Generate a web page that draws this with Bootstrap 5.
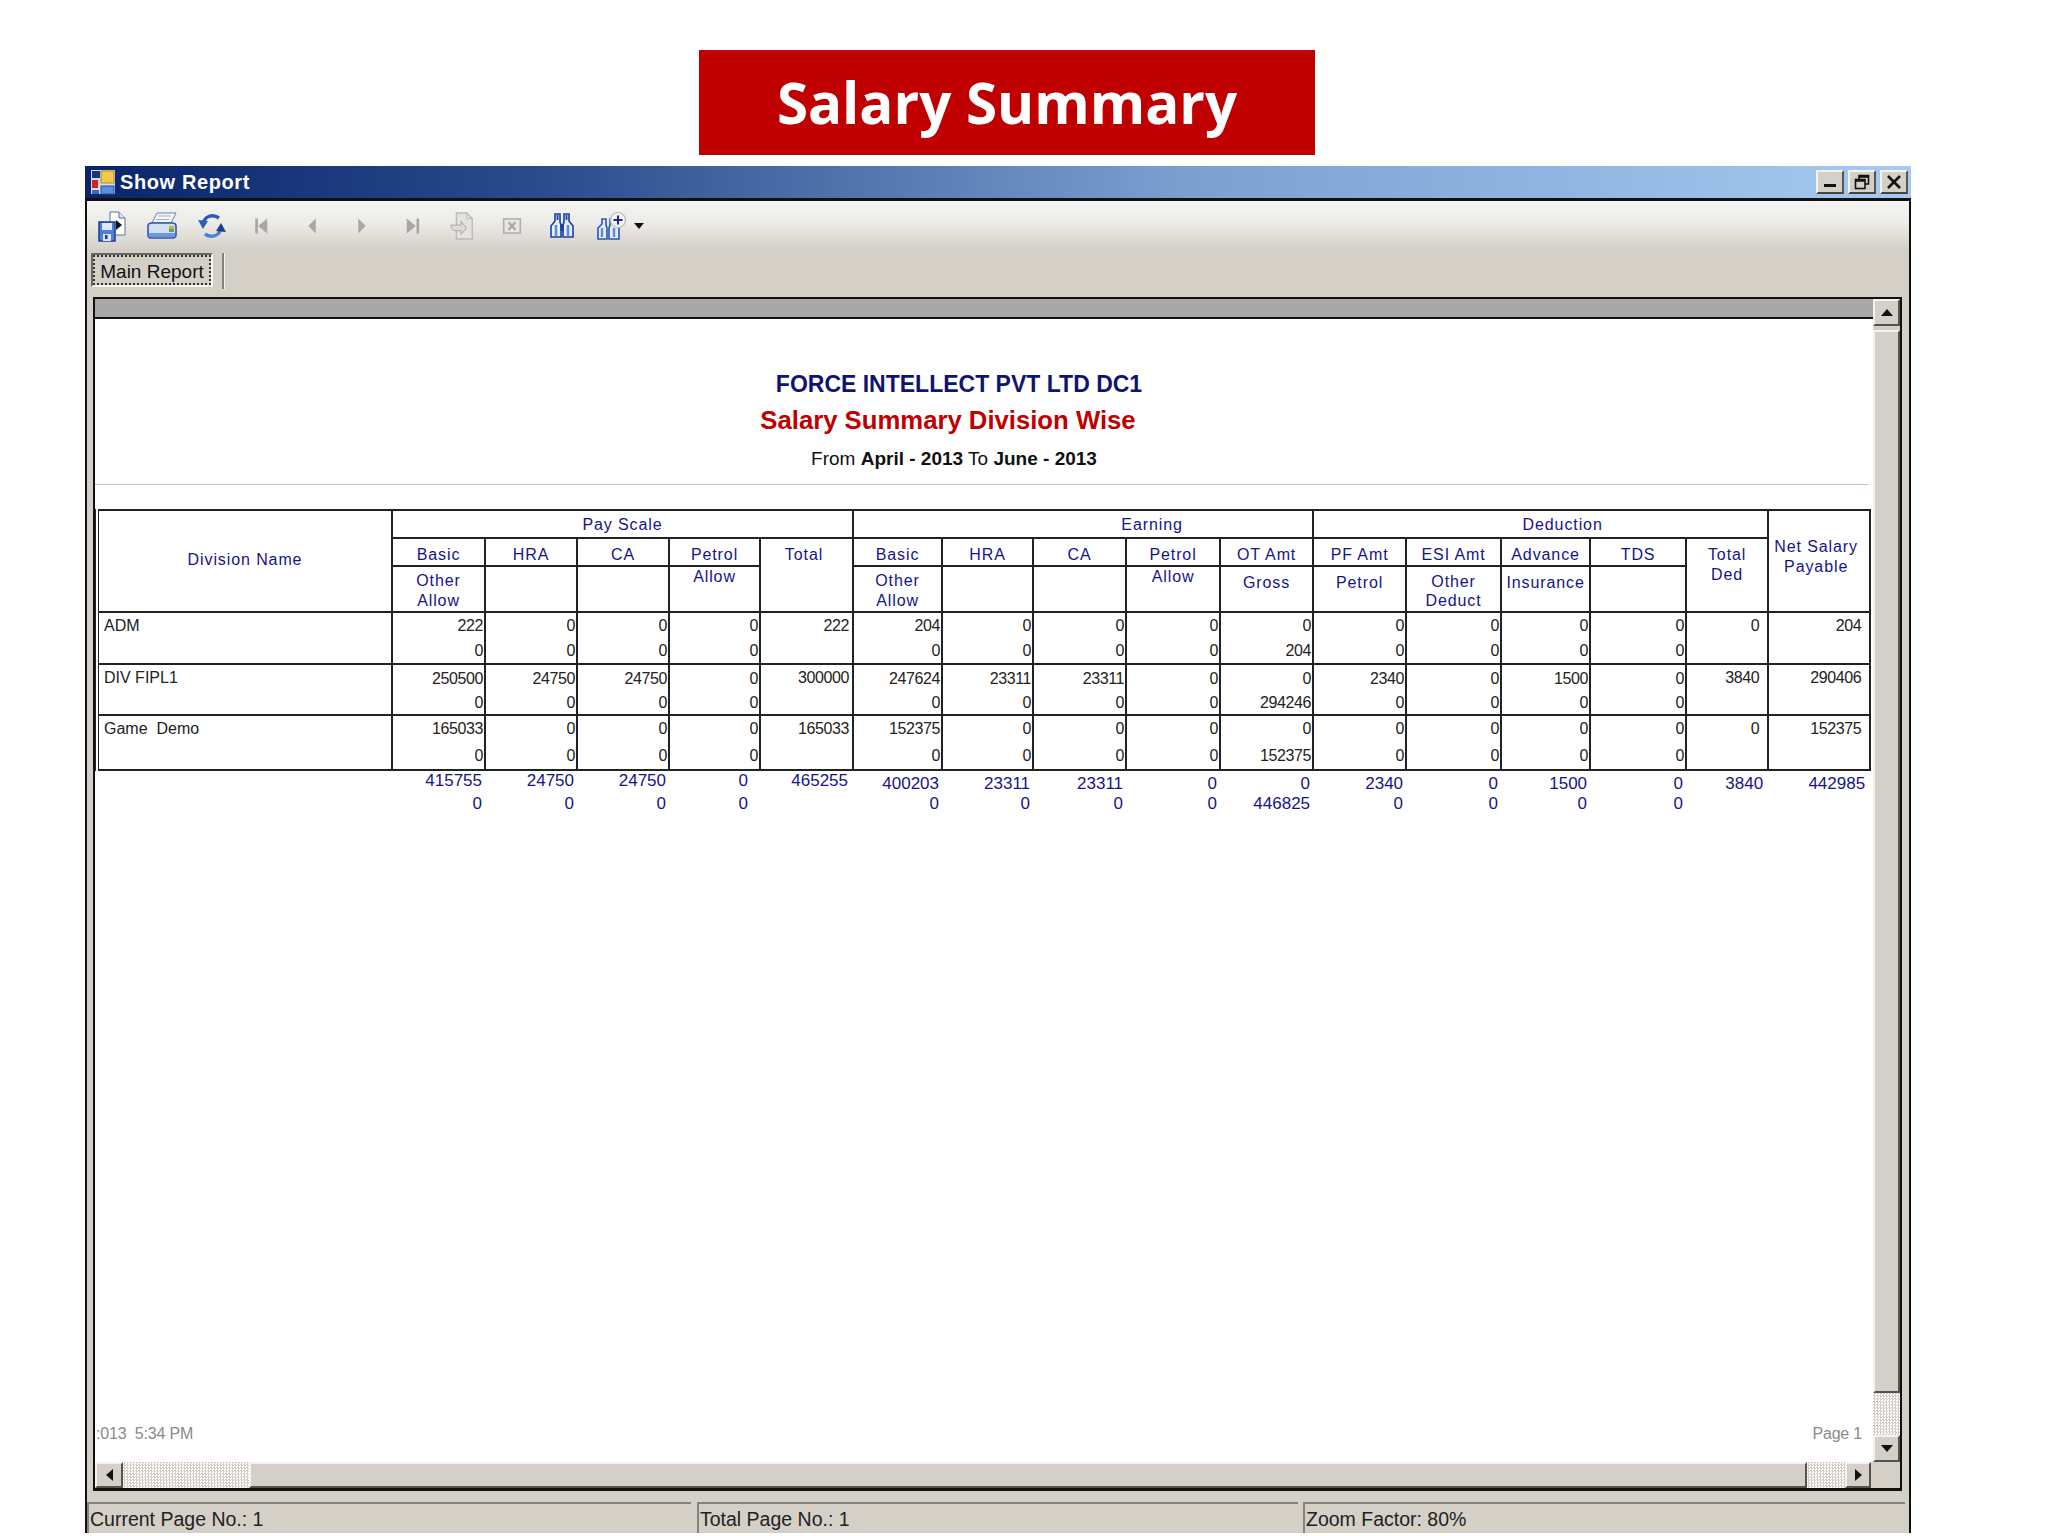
<!DOCTYPE html>
<html lang="en">
<head>
  <meta charset="UTF-8" />
  <meta name="viewport" content="width=device-width, initial-scale=1.0" />
  <title>Salary Summary</title>
  <link href="https://cdn.jsdelivr.net/npm/bootstrap@5.3.0/dist/css/bootstrap.min.css" rel="stylesheet" />
  <style>
    body {
      background-color: #fff;
      height: 1536px;
      overflow: hidden;
      font-family: "Liberation Sans", Arial, sans-serif;
    }

    .banner {
      width: 616px;
      height: 105px;
      margin: 50px 0 11px 699px;
      padding-top: 2px;
      background-color: #c00000;
      color: #fff;
      font-family: "Open Sans", sans-serif;
      font-size: 56.5px;
      font-weight: 700;
    }

    .win { width: 1826px; margin-left: 85px; }

    .titlebar {
      height: 32px;
      padding: 0 3px 0 5px;
      background: linear-gradient(90deg, #0a246a 0%, #2a4c8c 25%, #7c9fd0 60%, #a6caf0 100%);
      color: #fff;
      font-size: 20px;
      font-weight: 700;
      letter-spacing: .6px;
    }

    .win-btn {
      width: 28px;
      height: 24px;
      background-color: #d4d0c8;
      border: 2px solid;
      border-color: #f4f3ef #555 #444 #f4f3ef;
    }

    .win-body {
      height: 1335px;
      background-color: #d4d0c8;
      border: solid #111;
      border-width: 3px 2px 0 2px;
    }

    .toolbar {
      height: 49px;
      background: linear-gradient(180deg, #f5f5f3 0%, #ecebe7 45%, #d4d0c8 100%);
    }

    .tool { width: 50px; height: 49px; }

    .caret-down {
      width: 0;
      height: 0;
      margin-left: -3px;
      border: 5px solid transparent;
      border-top: 6px solid #111;
      border-bottom: 0;
    }

    .tabs { height: 47px; padding: 3px 0 0 4px; }

    .tab-btn {
      width: 122px;
      height: 34px;
      padding: 3px 0 0;
      background-color: #d4d0c8;
      border: 2px solid;
      border-color: #666 #f6f5f1 #f6f5f1 #666;
      border-radius: 0;
      color: #111;
      font-size: 19px;
      line-height: 24px;
      outline: 2px dotted #333;
      outline-offset: -4px;
    }

    .tab-sep {
      width: 3px;
      height: 36px;
      margin-left: 9px;
      border-left: 2px solid #85837d;
      border-right: 1px solid #f6f5f1;
    }

    .frame {
      height: 1194px;
      margin: 0 7px 0 6px;
      border: solid #111;
      border-width: 2px 2px 3px 2px;
    }

    .band { height: 20px; background-color: #a9a7a5; border-bottom: 2px solid #111; }

    .report { background-color: #fff; color: #222; }

    .report-head { width: 1722px; }
    .report-head div { line-height: 36px; }
    .r-company { padding: 47px 0 0 6px; color: #0e1470; font-size: 23px; font-weight: 700; }
    .r-name { padding-right: 16px; color: #c00000; font-size: 25.7px; font-weight: 700; }
    .r-range { padding: 3px 4px 0 0; color: #111; font-size: 19px; }
    .r-rule { height: 1px; margin: 7px 5px 24px 0; background-color: #bcbcea; }

    .grid {
      width: 1773px;
      margin-bottom: 0;
      table-layout: fixed;
      border-collapse: collapse;
      font-size: 16px;
      line-height: 20px;
    }

    .grid > :not(caption) > * > * {
      padding: 0;
      background-color: transparent;
      border: 2px solid #222;
      box-shadow: none;
    }

    .grid th {
      color: #14148a;
      font-weight: 400;
      letter-spacing: .9px;
      text-align: center;
      vertical-align: top;
    }

    .grid td { color: #222; letter-spacing: -.4px; text-align: right; }

    .grid .head-a { height: 28px; }
    .grid .head-b { height: 27px; }
    .grid .head-c { height: 44px; }
    .grid th.first { padding-bottom: 3px; border-left: 4px double #222; vertical-align: middle; }
    .grid th.group { padding-top: 2px; vertical-align: middle; }
    .grid th.earning { padding-left: 138px; }
    .grid th.deduction { padding-left: 44px; }
    .grid th.mid { padding-top: 6px; }
    .grid th.pt4 { padding-top: 4px; }
    .grid th.pt6 { padding-top: 6px; }
    .grid th.tight { padding-top: 5px; line-height: 19px; }
    .grid th.net { padding: 26px 6px 0 0; }
    .grid th.total { padding-right: 5px; }

    .grid .up td { padding-right: 1px; border-bottom: 0; vertical-align: middle; }
    .grid .down td { padding-right: 1px; border-top: 0; vertical-align: middle; }

    .grid .up td[rowspan] { border-bottom: 2px solid #222; vertical-align: top; }
    .grid .up td.name { padding: 3px 0 0 5px; border-left: 4px double #222; letter-spacing: 0; text-align: left; }
    .grid .up td.side { padding: 3px 8px 0 0; }
    .grid .up td.solo { padding: 3px 3px 0 0; }

    .grid .h28 { height: 28px; }
    .grid .h27 { height: 27px; }
    .grid .h25 { height: 25px; }
    .grid .h23 { height: 23px; }

    .grid .sum td {
      padding: 0 3px 0 0;
      border: 0;
      color: #14148a;
      font-size: 17px;
      letter-spacing: 0;
      vertical-align: top;
    }

    .grid .sum-a { height: 20px; }
    .grid .sum-b { height: 24px; }
    .grid .sum-a td { padding-top: 3px; }
    .grid .sum .hi { padding-top: 0; }
    .grid .sum .gap12 { padding-right: 12px; }
    .grid .sum .gap5 { padding-right: 5px; }

    .report-foot { padding: 0 11px 18px 1px; color: #8a8a8a; font-size: 16px; line-height: 20px; letter-spacing: -.2px; }

    .vscroll { width: 27px; }
    .hscroll { height: 26px; }

    .bevel {
      background-color: #d4d0c8;
      border: 2px solid;
      border-color: #f4f3ef #55534e #55534e #f4f3ef;
    }

    .dither { background: repeating-conic-gradient(#d4d0c8 0 25%, #fff 0 50%) 0 0 / 3px 3px; }

    .v-btn { width: 27px; height: 27px; }
    .h-btn { width: 28px; height: 26px; }
    .h-btn.end { width: 26px; }

    .tri { width: 0; height: 0; border: 6px solid transparent; }
    .tri.t-up { border-top: 0; border-bottom: 7px solid #111; }
    .tri.t-down { border-bottom: 0; border-top: 7px solid #111; }
    .tri.t-left { border-left: 0; border-right: 7px solid #111; }
    .tri.t-right { border-right: 0; border-left: 7px solid #111; }

    .corner { width: 29px; }

    .status { height: 31px; margin-top: 11px; color: #222; font-size: 19.5px; line-height: 30px; }
    .status > div {
      height: 31px;
      padding-left: 1px;
      border-top: 2px solid #85837d;
      border-left: 2px solid #85837d;
      white-space: nowrap;
    }
    .s-a { width: 604px; margin-right: 6px; }
    .s-b { width: 601px; margin-right: 5px; }
    .s-c { width: 602px; }
  </style>
</head>
<body>

  <div class="banner d-flex justify-content-center align-items-center">Salary Summary</div>

  <div class="win">
    <!-- Title bar -->
    <div class="titlebar d-flex align-items-center">
      <svg width="26" height="26" viewBox="0 0 26 26" class="me-1">
        <rect x="1" y="1" width="24" height="24" fill="#d8dce8" />
        <rect x="2" y="2" width="8" height="7" fill="#1c3478" />
        <rect x="11" y="2" width="13" height="12" fill="#f2c94a" stroke="#a88a2a" />
        <rect x="2" y="11" width="6" height="8" fill="#c8261e" />
        <rect x="2" y="21" width="7" height="4" fill="#3a6ab8" />
        <rect x="11" y="17" width="13" height="8" fill="#5c8fe0" stroke="#2a4c9c" />
      </svg>
      <span>Show Report</span>
      <div class="ms-auto d-flex">
        <div class="win-btn d-flex align-items-end justify-content-center pb-1 me-1"><svg width="12" height="4"><rect width="12" height="3" fill="#111" /></svg></div>
        <div class="win-btn d-flex align-items-center justify-content-center"><svg width="16" height="16" viewBox="0 0 16 16" fill="none" stroke="#111" stroke-width="1.6"><path d="M5 5V1.5h9.5V10H11" /><path d="M5 2.5h9.5" stroke-width="2.5" /><rect x="1.5" y="5.5" width="9.5" height="9" /><path d="M1.5 6.5H11" stroke-width="2.5" /></svg></div>
        <div class="win-btn d-flex align-items-center justify-content-center ms-1"><svg width="16" height="14" viewBox="0 0 16 14" stroke="#111" stroke-width="2.6"><path d="M2 1l12 12M14 1L2 13" /></svg></div>
      </div>
    </div>

    <div class="win-body d-flex flex-column">
      <!-- Toolbar -->
      <div class="toolbar d-flex align-items-center">
        <div class="tool d-flex align-items-center justify-content-center">
          <svg width="32" height="32" viewBox="0 0 32 32">
            <path d="M14 2h9l6 6v17H14z" fill="#fff" stroke="#55709c" />
            <path d="M23 2v6h6" fill="#dfe8f8" stroke="#55709c" />
            <path d="M20 10l6 5-6 5z" fill="#111" />
            <rect x="3" y="12" width="16" height="19" fill="#4f7fd6" stroke="#1c3f94" stroke-width="1.5" />
            <rect x="6" y="13" width="10" height="7" fill="#dfe8f8" />
            <rect x="7" y="24" width="8" height="7" fill="#dfe4ee" />
            <rect x="9" y="25" width="2.5" height="4" fill="#1c3f94" />
          </svg>
        </div>
        <div class="tool d-flex align-items-center justify-content-center">
          <svg width="32" height="32" viewBox="0 0 32 32">
            <path d="M11 3h19l-5 10H6z" fill="#f4f6fb" stroke="#6a7ea8" />
            <path d="M12 6h13M10 9.500h13" stroke="#9fb0cc" />
            <path d="M2 16q0-3 4-3h20q4 0 4 3v9q0 3-4 3H6q-4 0-4-3z" fill="#cfe0f6" stroke="#2c56a8" stroke-width="1.6" />
            <path d="M3 23h26v2q0 2-3 2H6q-3 0-3-2z" fill="#6f98dc" />
            <rect x="23" y="16" width="5" height="3" fill="#e0a82e" />
            <rect x="23" y="19" width="5" height="3" fill="#4fae4f" />
          </svg>
        </div>
        <div class="tool d-flex align-items-center justify-content-center">
          <svg width="32" height="32" viewBox="0 0 32 32">
            <path d="M7 14C8 7 16 3 23 8" fill="none" stroke="#2b5db8" stroke-width="3.4" />
            <path d="M2 10l10 1-5 8z" fill="#2b5db8" />
            <path d="M25 18C24 25 16 29 9 24" fill="none" stroke="#4b80d4" stroke-width="3.4" />
            <path d="M30 22l-10-1 5-8z" fill="#1c3f94" />
          </svg>
        </div>
        <div class="tool d-flex align-items-center justify-content-center">
          <svg width="18" height="18" viewBox="0 0 24 24" fill="#a8a7a3"><rect x="3" y="2" width="3.500" height="20" /><path d="M19 2v20L7 12z" /></svg>
        </div>
        <div class="tool d-flex align-items-center justify-content-center">
          <svg width="18" height="18" viewBox="0 0 24 24" fill="#a8a7a3"><path d="M17 2v20L7 12z" /></svg>
        </div>
        <div class="tool d-flex align-items-center justify-content-center">
          <svg width="18" height="18" viewBox="0 0 24 24" fill="#a8a7a3"><path d="M7 2v20l10-10z" /></svg>
        </div>
        <div class="tool d-flex align-items-center justify-content-center">
          <svg width="18" height="18" viewBox="0 0 24 24" fill="#a8a7a3"><path d="M5 2v20l12-10z" /><rect x="18" y="2" width="3.500" height="20" /></svg>
        </div>
        <div class="tool d-flex align-items-center justify-content-center">
          <svg width="28" height="30" viewBox="0 0 30 32">
            <path d="M9 2h11l6 6v22H9z" fill="#e4e3df" stroke="#bcbbb6" stroke-width="1.5" />
            <path d="M20 2v6h6" fill="none" stroke="#bcbbb6" />
            <path d="M3 15h11v-4l6 7-6 7v-4H8q-4 0-5-6z" fill="#dcdbd6" stroke="#a8a7a3" />
          </svg>
        </div>
        <div class="tool d-flex align-items-center justify-content-center">
          <svg width="20" height="18" viewBox="0 0 24 21">
            <rect x="2" y="2" width="20" height="17" fill="#e6e5e1" stroke="#b2b1ac" stroke-width="2" />
            <path d="M8 6l8 9M16 6l-8 9" stroke="#a8a7a3" stroke-width="2.600" />
          </svg>
        </div>
        <div class="tool d-flex align-items-center justify-content-center">
          <svg width="26" height="27" viewBox="0 0 26 27" fill="#e4edfa" stroke="#1d3f9e" stroke-width="1.6">
            <path d="M6 2h5v8l1 3v12H2V14l4-5z" />
            <path d="M20 2h-5v8l-1 3v12h10V14l-4-5z" />
            <path d="M12 13h2v5h-2z" fill="#1d3f9e" />
            <path d="M7 13v11M19 13v11" stroke="#5f8ad8" stroke-width="2.600" />
            <path d="M8.500 3v5M17.500 3v5" stroke="#1d3f9e" stroke-width="1.800" />
          </svg>
        </div>
        <div class="tool d-flex align-items-center justify-content-center">
          <svg width="30" height="30" viewBox="0 0 30 30" fill="#e4edfa" stroke="#2a55b4" stroke-width="1.600">
            <path d="M5 8h4v6l1 3v11H1V17l4-4z" />
            <path d="M16 8h-3v6l-1 3v11h10V17l-3-4z" />
            <path d="M5 17v9M17 17v9" stroke="#5f8ad8" stroke-width="2.400" />
            <circle cx="21" cy="9" r="7.500" fill="#f5f5f3" stroke="#b8b8b4" stroke-width="1.200" />
            <path d="M21 4.500v9M16.500 9h9" stroke="#23239a" stroke-width="2" />
          </svg>
        </div>
        <div class="caret-down"></div>
      </div>

      <!-- Tabs -->
      <div class="tabs d-flex align-items-start">
        <button type="button" class="btn tab-btn">Main Report</button>
        <div class="tab-sep"></div>
      </div>

      <!-- Report viewer -->
      <div class="frame d-flex flex-column">
        <div class="d-flex flex-grow-1" style="min-height: 0">
          <div class="flex-grow-1 d-flex flex-column">
            <div class="band"></div>
            <div class="report flex-grow-1 d-flex flex-column">
              <div class="report-head text-center">
                <div class="r-company">FORCE INTELLECT PVT LTD DC1</div>
                <div class="r-name">Salary Summary Division Wise</div>
                <div class="r-range">From <b>April - 2013</b> To <b>June - 2013</b></div>
              </div>
              <div class="r-rule"></div>

              <table class="table grid">
                <colgroup>
                  <col style="width: 295px" /><col style="width: 93px" /><col style="width: 92px" /><col style="width: 92px" /><col style="width: 91px" /><col style="width: 93px" />
                  <col style="width: 89px" /><col style="width: 91px" /><col style="width: 93px" /><col style="width: 94px" /><col style="width: 93px" />
                  <col style="width: 93px" /><col style="width: 95px" /><col style="width: 89px" /><col style="width: 96px" /><col style="width: 82px" /><col style="width: 102px" />
                </colgroup>
                <thead>
                  <tr class="head-a">
                    <th rowspan="3" class="first">Division Name</th>
                    <th colspan="5" class="group">Pay Scale</th>
                    <th colspan="5" class="group earning">Earning</th>
                    <th colspan="5" class="group deduction">Deduction</th>
                    <th rowspan="3" class="net">Net Salary<br />Payable</th>
                  </tr>
                  <tr class="head-b">
                    <th class="mid">Basic</th><th class="mid">HRA</th><th class="mid">CA</th><th class="mid">Petrol</th>
                    <th rowspan="2" class="mid total">Total</th>
                    <th class="mid">Basic</th><th class="mid">HRA</th><th class="mid">CA</th><th class="mid">Petrol</th><th class="mid">OT Amt</th>
                    <th class="mid">PF Amt</th><th class="mid">ESI Amt</th><th class="mid">Advance</th><th class="mid">TDS</th>
                    <th rowspan="2" class="mid">Total<br />Ded</th>
                  </tr>
                  <tr class="head-c">
                    <th class="pt4">Other<br />Allow</th><th></th><th></th><th>Allow</th>
                    <th class="pt4">Other<br />Allow</th><th></th><th></th><th>Allow</th><th class="pt6">Gross</th>
                    <th class="pt6">Petrol</th><th class="tight">Other<br />Deduct</th><th class="pt6">Insurance</th><th></th>
                  </tr>
                </thead>
                <tbody>
                  <tr class="up h27">
                    <td rowspan="2" class="name">ADM</td>
                    <td>222</td><td>0</td><td>0</td><td>0</td><td rowspan="2" class="solo">222</td>
                    <td>204</td><td>0</td><td>0</td><td>0</td><td>0</td>
                    <td>0</td><td>0</td><td>0</td><td>0</td><td rowspan="2" class="side">0</td><td rowspan="2" class="side">204</td>
                  </tr>
                  <tr class="down h25">
                    <td>0</td><td>0</td><td>0</td><td>0</td>
                    <td>0</td><td>0</td><td>0</td><td>0</td><td>204</td>
                    <td>0</td><td>0</td><td>0</td><td>0</td>
                  </tr>
                  <tr class="up h28">
                    <td rowspan="2" class="name">DIV FIPL1</td>
                    <td>250500</td><td>24750</td><td>24750</td><td>0</td><td rowspan="2" class="solo">300000</td>
                    <td>247624</td><td>23311</td><td>23311</td><td>0</td><td>0</td>
                    <td>2340</td><td>0</td><td>1500</td><td>0</td><td rowspan="2" class="side">3840</td><td rowspan="2" class="side">290406</td>
                  </tr>
                  <tr class="down h23">
                    <td>0</td><td>0</td><td>0</td><td>0</td>
                    <td>0</td><td>0</td><td>0</td><td>0</td><td>294246</td>
                    <td>0</td><td>0</td><td>0</td><td>0</td>
                  </tr>
                  <tr class="up h27">
                    <td rowspan="2" class="name">Game&nbsp; Demo</td>
                    <td>165033</td><td>0</td><td>0</td><td>0</td><td rowspan="2" class="solo">165033</td>
                    <td>152375</td><td>0</td><td>0</td><td>0</td><td>0</td>
                    <td>0</td><td>0</td><td>0</td><td>0</td><td rowspan="2" class="side">0</td><td rowspan="2" class="side">152375</td>
                  </tr>
                  <tr class="down h28">
                    <td>0</td><td>0</td><td>0</td><td>0</td>
                    <td>0</td><td>0</td><td>0</td><td>0</td><td>152375</td>
                    <td>0</td><td>0</td><td>0</td><td>0</td>
                  </tr>
                  <tr class="sum sum-a">
                    <td></td>
                    <td class="hi">415755</td><td class="hi">24750</td><td class="hi">24750</td><td class="hi gap12">0</td><td class="hi gap5">465255</td>
                    <td>400203</td><td>23311</td><td>23311</td><td>0</td><td>0</td>
                    <td>2340</td><td>0</td><td>1500</td><td>0</td><td class="gap5">3840</td><td class="gap5">442985</td>
                  </tr>
                  <tr class="sum sum-b">
                    <td></td>
                    <td>0</td><td>0</td><td>0</td><td class="gap12">0</td><td></td>
                    <td>0</td><td>0</td><td>0</td><td>0</td><td>446825</td>
                    <td>0</td><td>0</td><td>0</td><td>0</td><td></td><td></td>
                  </tr>
                </tbody>
              </table>

              <div class="report-foot mt-auto d-flex justify-content-between">
                <span>:013 &nbsp;5:34 PM</span>
                <span>Page 1</span>
              </div>
            </div>
          </div>

          <!-- Vertical scrollbar -->
          <div class="vscroll d-flex flex-column">
            <div class="bevel v-btn d-flex align-items-center justify-content-center"><div class="tri t-up"></div></div>
            <div class="bevel flex-grow-1 mt-1"></div>
            <div class="dither" style="height: 42px"></div>
            <div class="bevel v-btn d-flex align-items-center justify-content-center"><div class="tri t-down"></div></div>
          </div>
        </div>

        <!-- Horizontal scrollbar -->
        <div class="hscroll d-flex">
          <div class="bevel h-btn d-flex align-items-center justify-content-center"><div class="tri t-left"></div></div>
          <div class="dither" style="width: 126px"></div>
          <div class="bevel flex-grow-1"></div>
          <div class="dither" style="width: 38px"></div>
          <div class="bevel h-btn end d-flex align-items-center justify-content-center"><div class="tri t-right"></div></div>
          <div class="corner"></div>
        </div>
      </div>

      <!-- Status bar -->
      <div class="status d-flex">
        <div class="s-a">Current Page No.: 1</div>
        <div class="s-b">Total Page No.: 1</div>
        <div class="s-c">Zoom Factor: 80%</div>
      </div>
    </div>
  </div>

  <script src="https://cdn.jsdelivr.net/npm/bootstrap@5.3.0/dist/js/bootstrap.bundle.min.js"></script>
</body>
</html>
